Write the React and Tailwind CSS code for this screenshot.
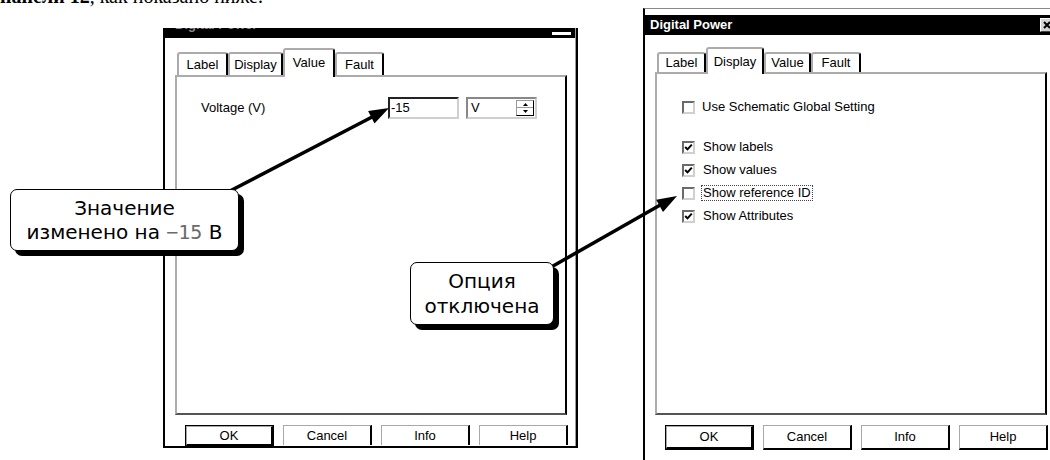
import React from 'react';

const sys = "[font-family:'Liberation_Sans',Arial,sans-serif]";
const callFont = "[font-family:'DejaVu_Sans','Noto_Sans',sans-serif]";

function Tab({ label, active, className }) {
  if (active) {
    return (
      <div className={`relative z-10 -mb-[2px] flex items-start justify-center rounded-t-[3px] border-2 border-b-0 border-t-[#ababab] border-l-[#ababab] border-r-black bg-white pt-[3px] ${className}`}>
        {label}
      </div>
    );
  }
  return (
    <div className={`flex items-center justify-center rounded-t-[3px] border-2 border-b-0 border-t-[#ababab] border-l-[#ababab] border-r-black bg-white ${className}`}>
      {label}
    </div>
  );
}

function Btn({ label, def, className }) {
  // default button gets the extra black frame
  if (def) {
    return (
      <div className={`flex border border-black ${className}`}>
        <div className="flex flex-1 items-center justify-center border-t border-l border-t-[#a8a8a8] border-l-[#a8a8a8] border-r-2 border-b-2 border-r-black border-b-black">
          {label}
        </div>
      </div>
    );
  }
  return (
    <div className={`flex items-center justify-center border-t border-l border-t-[#a8a8a8] border-l-[#a8a8a8] border-r-2 border-b-2 border-r-black border-b-black ${className}`}>
      {label}
    </div>
  );
}

function Check({ checked }) {
  return (
    <span className="flex h-[13px] w-[13px] shrink-0 items-center justify-center border-2 border-t-[#6a6a6a] border-l-[#6a6a6a] border-r-[#d0d0d0] border-b-[#d0d0d0] bg-white">
      {checked && (
        <svg width="9" height="9" viewBox="0 0 9 9">
          <path d="M1.2 4 L3.5 6.4 L7.8 1.6" fill="none" stroke="#000" strokeWidth="2" />
        </svg>
      )}
    </span>
  );
}

function LeftDialog() {
  return (
    <div className="mt-[20px] h-[420px] w-[415px] shrink-0 border-l-2 border-r-2 border-b-2 border-black bg-white">
      <div className="flex h-full flex-col border-r border-[#9a9a9a]">
        {/* title bar, mostly cut off */}
        <div className="flex h-[10px] items-start justify-between overflow-hidden bg-black">
          <span className="-mt-[11px] pl-[10px] text-[13px] font-bold leading-[16px] text-[#8a8a8a]">Digital Power</span>
          <span className="mr-[4px] mt-[4px] h-[3px] w-[19px] bg-white" />
        </div>
        <div className="flex items-end pl-[12px] pt-[10px] text-[13px] text-black">
          <Tab label="Label" className="h-[23px] w-[51px]" />
          <Tab label="Display" className="h-[23px] w-[55px]" />
          <Tab label="Value" active className="h-[29px] w-[52px]" />
          <Tab label="Fault" className="h-[23px] w-[49px]" />
        </div>
        <div className="ml-[10px] h-[341px] w-[392px] border-2 border-t-[#ababab] border-l-[#ababab] border-r-black border-b-[#555]">
          <div className="mt-[20px] flex h-[22px] items-center pl-[24px] text-[13px]">
            <span className="w-[187px]">Voltage (V)</span>
            <div className="flex h-[22px] w-[71px] items-center border-2 border-t-[#222] border-l-[#222] border-r-[#cfcfcf] border-b-[#cfcfcf] pl-[1px]">
              -15
            </div>
            <div className="ml-[7px] flex h-[22px] w-[71px] items-center border-2 border-t-[#888] border-l-[#888] border-r-[#cfcfcf] border-b-[#cfcfcf] pl-[3px]">
              <span>V</span>
              <div className="ml-auto mr-[1px] flex h-[16px] w-[18px] flex-col border border-[#9a9a9a] border-r-black border-b-black">
                <div className="flex flex-1 items-center justify-center border-b border-[#9a9a9a]">
                  <svg width="5" height="3" viewBox="0 0 5 3"><path d="M0 3 L2.5 0 L5 3Z" fill="#000" /></svg>
                </div>
                <div className="flex flex-1 items-center justify-center">
                  <svg width="5" height="3" viewBox="0 0 5 3"><path d="M0 0 L2.5 3 L5 0Z" fill="#000" /></svg>
                </div>
              </div>
            </div>
          </div>
        </div>
        <div className="mt-[10px] flex gap-[9px] pl-[20px] text-[13px]">
          <Btn label="OK" def className="h-[21px] w-[89px] border-b-0" />
          <div className="flex h-[20px] w-[89px] items-center justify-center border-t border-l border-t-[#a8a8a8] border-l-[#a8a8a8] border-r-2 border-r-black">Cancel</div>
          <div className="flex h-[20px] w-[89px] items-center justify-center border-t border-l border-t-[#a8a8a8] border-l-[#a8a8a8] border-r-2 border-r-black">Info</div>
          <div className="flex h-[20px] w-[89px] items-center justify-center border-t border-l border-t-[#a8a8a8] border-l-[#a8a8a8] border-r-2 border-r-black">Help</div>
        </div>
      </div>
    </div>
  );
}

function RightDialog() {
  const rows = [
    { label: 'Show labels', checked: true },
    { label: 'Show values', checked: true },
    { label: 'Show reference ID', checked: false, focus: true },
    { label: 'Show Attributes', checked: true },
  ];
  return (
    <div className="ml-[65px] h-[470px] w-[412px] shrink-0 border-l-2 border-t border-l-black border-t-[#8a8a8a] bg-white pt-[6px]">
      <div className="flex h-[20px] items-center justify-between bg-black pl-[5px]">
        <span className="text-[13px] font-bold text-white">Digital Power</span>
        <span className="mr-[1px] flex h-[14px] w-[14px] items-center justify-center border border-t-white border-l-white border-r-[#444] border-b-[#444] bg-[#d4d4d4]">
          <svg width="8" height="8" viewBox="0 0 8 8">
            <path d="M1 1 L7 7 M7 1 L1 7" stroke="#000" strokeWidth="2" />
          </svg>
        </span>
      </div>
      <div className="flex items-end pl-[12px] pt-[12px] text-[13px] text-black">
        <Tab label="Label" className="h-[20px] w-[49px]" />
        <Tab label="Display" active className="h-[27px] w-[58px]" />
        <Tab label="Value" className="h-[20px] w-[47px]" />
        <Tab label="Fault" className="h-[20px] w-[50px]" />
      </div>
      <div className="ml-[10px] h-[343px] w-[392px] border-2 border-t-[#ababab] border-l-[#ababab] border-r-black border-b-[#555] pl-[25px] pt-[25px] text-[13px]">
        <div className="flex h-[16px] items-center gap-[7px]">
          <Check />
          <span>Use Schematic Global Setting</span>
        </div>
        <div className="mt-[24px] flex flex-col gap-[7px]">
          {rows.map((r) => (
            <div key={r.label} className="flex h-[16px] items-center gap-[6px]">
              <Check checked={r.checked} />
              <span className={r.focus ? 'border border-dotted border-[#444] px-[1px] leading-[14px]' : 'pl-[2px]'}>{r.label}</span>
            </div>
          ))}
        </div>
      </div>
      <div className="mt-[10px] flex gap-[9px] pl-[20px] text-[13px]">
        <Btn label="OK" def className="h-[25px] w-[89px]" />
        <Btn label="Cancel" className="h-[25px] w-[89px]" />
        <Btn label="Info" className="h-[25px] w-[89px]" />
        <Btn label="Help" className="h-[25px] w-[89px]" />
      </div>
    </div>
  );
}

export default function App() {
  return (
    <div className={`relative h-[460px] w-[1050px] overflow-hidden bg-white text-black ${sys}`}>
      {/* end of the previous paragraph, cut by the page edge */}
      <div className="h-[8px] overflow-hidden">
        <p className="-mt-[16px] whitespace-nowrap text-[20px] leading-[24px] [font-family:'Liberation_Serif',serif]">
          <b>панели 12</b>, как показано ниже.
        </p>
      </div>

      <div className="flex items-start pl-[163px]">
        <LeftDialog />
        <RightDialog />
      </div>

      {/* arrows */}
      <svg className="pointer-events-none absolute inset-0 z-20" width="1050" height="460" viewBox="0 0 1050 460">
        <line x1="228" y1="192" x2="374" y2="116" stroke="#000" strokeWidth="3.5" />
        <polygon points="389,108 374.5,123.5 368.1,111.1" fill="#000" />
        <line x1="546" y1="270" x2="662" y2="204" stroke="#000" strokeWidth="3.5" />
        <polygon points="677,196 663,211.9 656.2,199.7" fill="#000" />
      </svg>

      {/* callouts */}
      <div className={`absolute left-[10px] top-[189px] z-30 flex h-[62px] w-[229px] flex-col items-center justify-center rounded-[7px] border-[1.5px] border-black bg-white text-[20px] leading-[24px] shadow-[5px_5px_0_0_#000] ${callFont}`}>
        <span>Значение</span>
        <span className="whitespace-nowrap">
          изменено на <span className="text-[#6b6b6b] [font-family:'DejaVu_Sans_Mono',monospace]">−15</span> В
        </span>
      </div>
      <div className={`absolute left-[410px] top-[262px] z-30 flex h-[63px] w-[144px] flex-col items-center justify-center rounded-[7px] border-[1.5px] border-black bg-white text-[20px] leading-[25px] shadow-[5px_5px_0_0_#000] ${callFont}`}>
        <span>Опция</span>
        <span>отключена</span>
      </div>
    </div>
  );
}
